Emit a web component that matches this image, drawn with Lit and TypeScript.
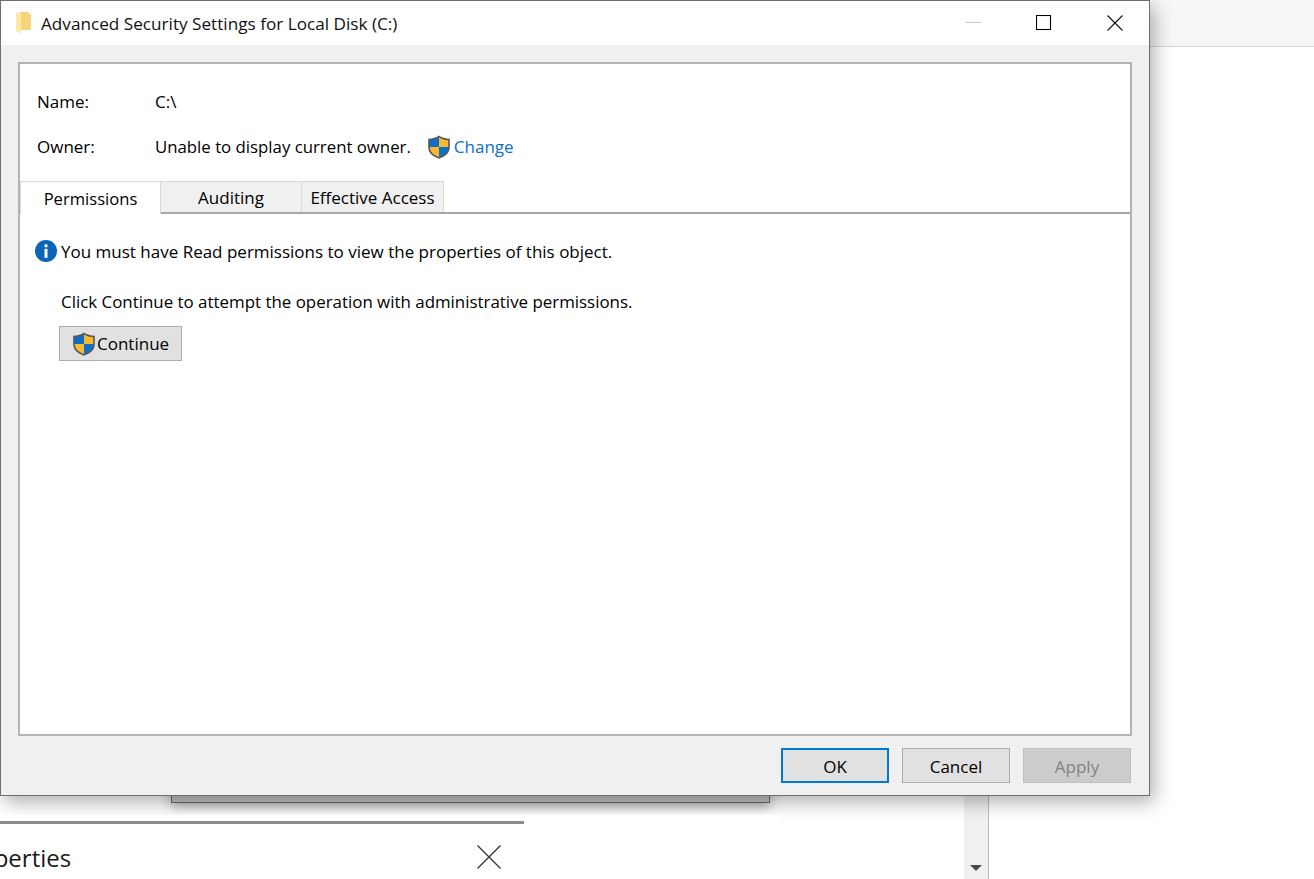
import { LitElement, html, css } from "lit";
import { customElement } from "lit/decorators.js";

const shield = (cls: string) => html`<svg class=${cls} viewBox="0 0 24 24" width="24" height="24" aria-hidden="true">
  <path d="M12 .6C9 2.800 5.600 3.600 1.200 3.800v8.200c0 5.800 4.200 9.400 10.800 11.800C18.600 21.400 22.800 17.800 22.800 12V3.800C18.400 3.600 15 2.800 12 .6Z" fill="#55585c"/>
  <path d="M12 2.400V12H2.800V5.200C6.400 4.900 9.400 4.100 12 2.400Z" fill="#0a6fc8"/>
  <path d="M12 2.400V12H21.200V5.200C17.600 4.900 14.600 4.100 12 2.400Z" fill="#fdb92c"/>
  <path d="M2.800 12H12V22C6.600 20 2.800 17 2.800 12Z" fill="#fdb92c"/>
  <path d="M21.200 12H12V22C17.400 20 21.200 17 21.200 12Z" fill="#0a6fc8"/>
</svg>`;

@customElement("app-root")
export class AppRoot extends LitElement {
  static styles = css`
    :host { display: block; width: 1314px; height: 879px; position: relative; overflow: hidden; background: #fff;
      font-family: "Open Sans", "Noto Sans", sans-serif; color: #000; font-size: 17px; }
    .strip { position: absolute; left: 1150px; right: 0; top: 0; height: 46px; background: #f7f7f7; border-bottom: 1px solid #d4d4d4; }
    .under { position: absolute; left: 171px; top: 780px; width: 597px; height: 21px; background: #c4c4c4;
      border: 1px solid #6a6a6a; box-shadow: 0 4px 12px rgba(0,0,0,.3); }
    .scroll { position: absolute; left: 964px; top: 796px; width: 25px; bottom: 0; background: #f0f0f0; border-right: 1px solid #bdbdbd; box-sizing: border-box; display: flex; align-items: flex-end; justify-content: center; padding-bottom: 8px; }
    .arrow { width: 0; height: 0; border-left: 6px solid transparent; border-right: 6px solid transparent; border-top: 6px solid #4a4a4a; }
    .lower { position: absolute; left: 0; top: 815px; width: 780px; height: 64px; background: #fff; overflow: hidden; }
    .lower .rule { width: 524px; height: 3px; margin-top: 6px; background: #8c8c8c; }
    .lower .t { position: absolute; left: -45px; top: 27px; font-size: 24px; line-height: 32px; color: #1a1a1a; white-space: nowrap; }
    .lower svg { position: absolute; left: 477px; top: 30px; }

    .dialog { position: absolute; left: 0; top: 0; width: 1150px; height: 796px; box-sizing: border-box; background: #f0f0f0;
      border: 1px solid #6e6e6e; box-shadow: 4px 6px 18px rgba(0,0,0,.32); display: flex; flex-direction: column; }
    .title { height: 44px; background: #fff; display: flex; align-items: center; flex: none; }
    .title .folder { margin-left: 14px; flex: none; }
    .title .name { margin-left: 9px; font-size: 17.160px; white-space: nowrap; color: #111; }
    .wbtns { margin-left: auto; display: flex; align-items: center; margin-right: -1px; }
    .wbtn { width: 71px; height: 44px; display: flex; align-items: center; justify-content: center; }

    .panel { margin: 17px 17px 0 17px; height: 674px; box-sizing: border-box; background: #fff; border: 2px solid #b4b4b4; display: flex; flex-direction: column; flex: none; }
    .info { padding: 15px 0 0 17px; display: grid; grid-template-columns: 118px 1fr; height: 117px; box-sizing: border-box; align-content: start; }
    .info > div { height: 45px; display: flex; align-items: center; white-space: nowrap; }
    .owner { font-size: 16.800px; }
    .link { color: #0a70c8; margin-left: 3px; font-size: 17px; }
    .sh-owner { margin-left: 16px; }
    .sh-btn { margin-right: 1px; }
    .tabs { display: flex; height: 33px; box-sizing: border-box; border-bottom: 2px solid #a8a8a8; }
    .tab { box-sizing: border-box; width: 141px; height: 31px; border: 1px solid #d9d9d9; border-bottom: none; border-left: none; background: #f0f0f0; display: flex; align-items: center; justify-content: center; white-space: nowrap; }
    .tab.active { background: #fff; height: 33px; margin-bottom: -2px; border-left: 1px solid #d9d9d9; font-size: 16.600px; }
    .tab.last { width: 142px; }
    .content { flex: 1; padding: 25px 0 0 15px; }
    .msg { display: flex; align-items: center; height: 24px; white-space: nowrap; }
    .msg svg { margin-right: 4px; }
    .click { margin: 27px 0 0 26px; height: 24px; line-height: 24px; white-space: nowrap; font-size: 16.900px; }
    .btn-c { margin: 12px 0 0 24px; box-sizing: border-box; width: 123px; height: 35px; background: #e1e1e1; border: 1px solid #adadad; display: flex; align-items: center; padding-left: 12px; }
    .footer { display: flex; justify-content: flex-end; gap: 13px; margin: 12px 18px 0 0; }
    .btn { box-sizing: border-box; width: 108px; height: 35px; background: #e1e1e1; border: 1px solid #adadad; display: flex; align-items: center; justify-content: center; padding-top: 1px; }
    .btn.ok { border: 2px solid #0078d7; }
    .btn.dis { background: #cccccc; border-color: #bfbfbf; color: #838383; }
  `;

  render() {
    return html`
      <div class="strip"></div>
      <div class="under"></div>
      <div class="scroll"><div class="arrow"></div></div>
      <div class="dialog">
        <div class="title">
          <svg class="folder" width="17" height="22" viewBox="0 0 17 22">
            <path d="M5 0H14V2H16V18H5Z" fill="#f5d47a"/>
            <path d="M1 0 6 2V21L2 20 1 19Z" fill="#fbe9a8"/>
          </svg>
          <span class="name">Advanced Security Settings for Local Disk (C:)</span>
          <div class="wbtns">
            <div class="wbtn"><svg width="16" height="2" viewBox="0 0 16 2"><rect width="16" height="1" fill="#c8c8c8"/></svg></div>
            <div class="wbtn"><svg width="16" height="16" viewBox="0 0 16 16"><rect x=".5" y=".5" width="14" height="14" fill="none" stroke="#000" stroke-width="1.100"/></svg></div>
            <div class="wbtn"><svg width="16" height="16" viewBox="0 0 16 16"><path d="M.5.5 15.500 15.500M15.500.5.5 15.500" stroke="#111" stroke-width="1.100" fill="none"/></svg></div>
          </div>
        </div>
        <div class="panel">
          <div class="info">
            <div>Name:</div><div>C:\\</div>
            <div>Owner:</div>
            <div class="owner">Unable to display current owner.${shield("sh-owner")}<span class="link">Change</span></div>
          </div>
          <div class="tabs">
            <div class="tab active">Permissions</div>
            <div class="tab">Auditing</div>
            <div class="tab last">Effective Access</div>
          </div>
          <div class="content">
            <div class="msg">
              <svg width="22" height="22" viewBox="0 0 22 22"><circle cx="11" cy="11" r="11" fill="#0a64b8"/><circle cx="11" cy="5.800" r="1.700" fill="#fff"/><rect x="9.500" y="8.800" width="3" height="9" fill="#fff"/></svg>
              You must have Read permissions to view the properties of this object.
            </div>
            <div class="click">Click Continue to attempt the operation with administrative permissions.</div>
            <div class="btn-c">${shield("sh-btn")}Continue</div>
          </div>
        </div>
        <div class="footer">
          <div class="btn ok">OK</div>
          <div class="btn">Cancel</div>
          <div class="btn dis">Apply</div>
        </div>
      </div>
      <div class="lower">
        <div class="rule"></div>
        <div class="t">Properties</div>
        <svg width="24" height="24" viewBox="0 0 24 24"><path d="M.5.5 23.500 23.500M23.500.5.5 23.500" stroke="#333" stroke-width="1.300" fill="none"/></svg>
      </div>
    `;
  }
}
